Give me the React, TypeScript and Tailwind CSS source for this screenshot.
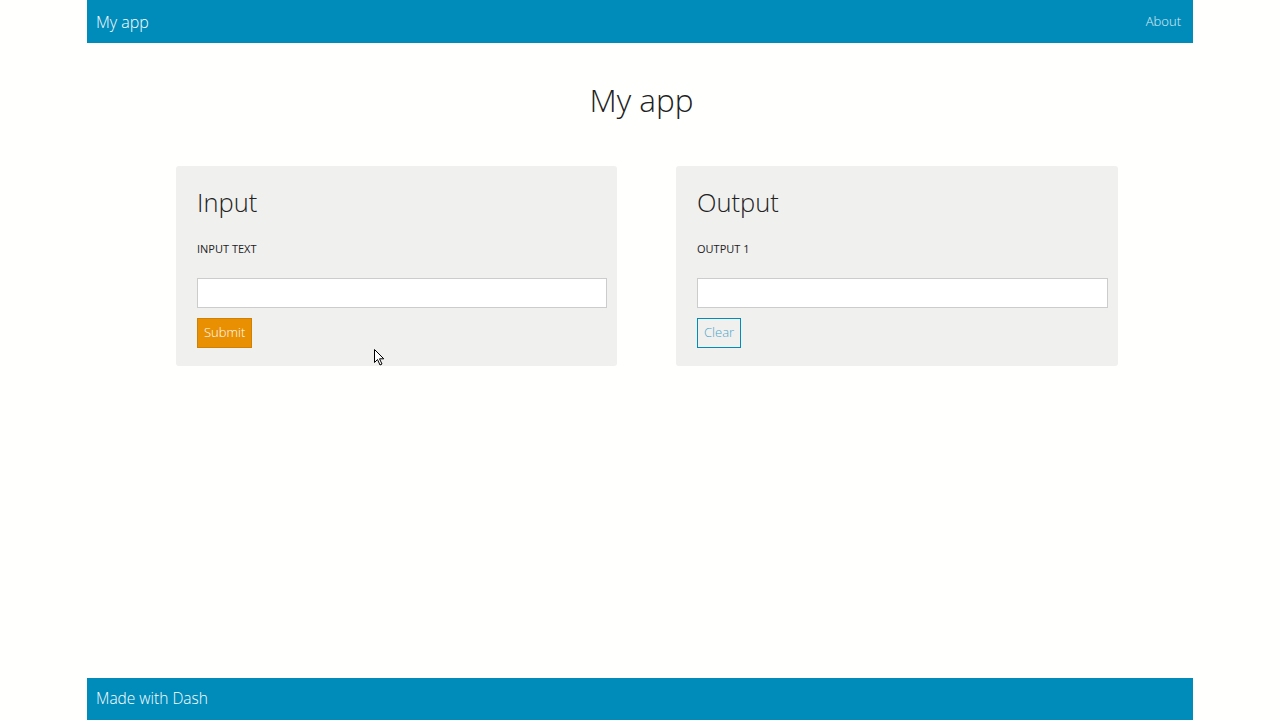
const Panel = ({
  title,
  label,
  button,
  width,
}: {
  title: string;
  label: string;
  button: JSX.Element;
  width: string;
}) => (
  <div className={`${width} rounded-[3px] bg-[#f0f0ef] pl-[21px] pr-[10px] pt-[18px] pb-[18px]`}>
    <h2 className="text-[25.5px] font-light leading-[36px] text-[#222]">{title}</h2>
    <div className="mt-[21px] text-[11px] leading-[16px] uppercase text-[#222]">{label}</div>
    <input
      type="text"
      className="mt-[21px] block h-[30px] w-full border border-[#cccccc] bg-white px-2 text-[14px] outline-none"
    />
    <div className="mt-[10px] flex">{button}</div>
  </div>
);

const Cursor = () => (
  <svg
    className="absolute left-[374px] top-[349px]"
    width="11"
    height="17"
    viewBox="0 0 11 17"
  >
    <path
      d="M0.5 0.5 L0.5 13.5 L3.5 10.5 L6 16 L8 15 L5.5 9.8 L9.8 9.8 Z"
      fill="white"
      stroke="black"
      strokeWidth="1"
      strokeLinejoin="round"
    />
  </svg>
);

export default function App() {
  return (
    <div className="relative flex h-[720px] flex-col bg-[#fffffd] font-['Open_Sans',_sans-serif]">
      <header className="mx-auto flex h-[43px] w-[1106px] items-center justify-between bg-[#008cba] pl-[9px] pr-[12px]">
        <span className="text-[16px] font-light text-white">My app</span>
        <a href="#" className="text-[13px] font-light text-white/85">
          About
        </a>
      </header>

      <main className="mx-auto flex w-[1106px] flex-1 flex-col">
        <h1 className="mt-[35px] pl-[3px] text-center text-[31.5px] font-light leading-[44px] text-[#222]">
          My app
        </h1>
        <div className="mt-[44px] flex gap-[59px] pl-[89px]">
          <Panel
            width="w-[441px]"
            title="Input"
            label="Input text"
            button={
              <button className="h-[30px] border border-[#d08002] bg-[#e99002] px-[6px] text-[13px] font-light text-white">
                Submit
              </button>
            }
          />
          <Panel
            width="w-[442px]"
            title="Output"
            label="Output 1"
            button={
              <button className="h-[30px] border border-[#008cba] bg-transparent px-[6px] text-[13px] font-light text-[#4aa6c8]">
                Clear
              </button>
            }
          />
        </div>
      </main>

      <footer className="mx-auto flex h-[42px] w-[1106px] items-center bg-[#008cba] pl-[9px]">
        <span className="text-[15.5px] font-light text-white">Made with Dash</span>
      </footer>

      <Cursor />
    </div>
  );
}
